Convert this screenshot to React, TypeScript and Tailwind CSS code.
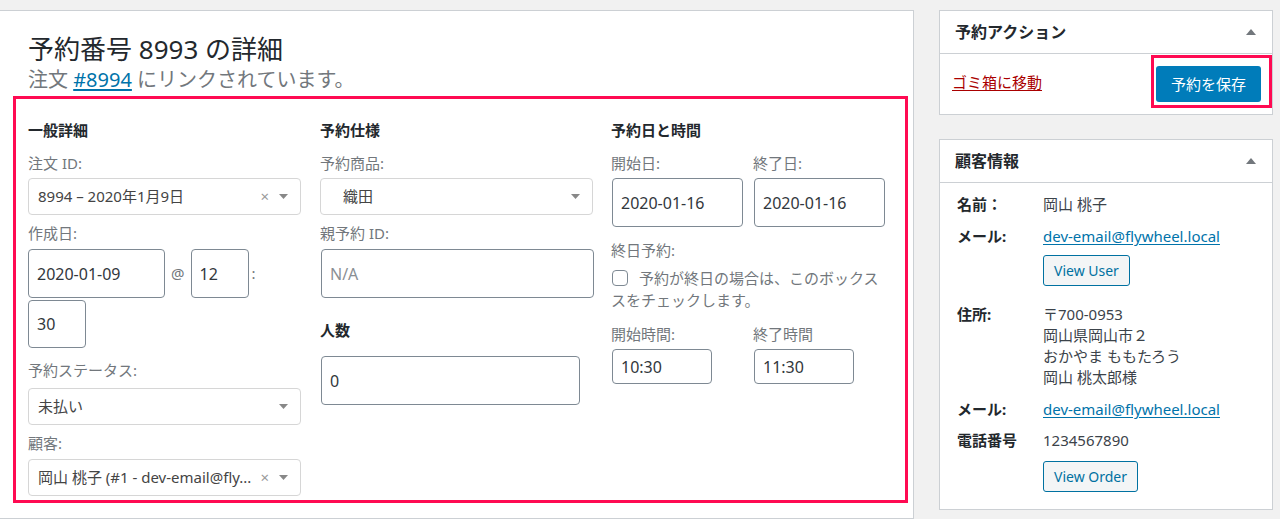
import React from 'react';

const font = "font-['Noto_Sans','Noto_Sans_CJK_JP',sans-serif]";

function Caret() {
  return (
    <svg width="9" height="5" viewBox="0 0 9 5" className="shrink-0">
      <path d="M0 0h9L4.5 5z" fill="#888" />
    </svg>
  );
}

function Select({ value, clear, indent }: { value: string; clear?: boolean; indent?: boolean }) {
  return (
    <div className="flex h-[37px] w-[273px] items-center rounded-[4px] border border-[#d6d6d6] bg-white pl-[9px] pr-[12px] text-[15px] text-[#444]">
      <span className={`flex-1 truncate whitespace-nowrap ${indent ? 'pl-[13px]' : ''}`}>{value}</span>
      {clear && <span className="mr-[10px] text-[15px] leading-none text-[#999]">×</span>}
      <Caret />
    </div>
  );
}

function TextInput({
  value,
  width,
  height = 'h-[49px]',
  placeholder,
}: {
  value?: string;
  width: string;
  height?: string;
  placeholder?: string;
}) {
  return (
    <div
      className={`flex ${height} ${width} items-center rounded-[4px] border border-[#7e8993] bg-white px-[8px] text-[16px] ${
        placeholder ? 'text-[#8a8f94]' : 'text-[#32373c]'
      }`}
    >
      {value ?? placeholder}
    </div>
  );
}

function Label({ children, className = '' }: { children: React.ReactNode; className?: string }) {
  return <div className={`h-[20px] text-[15px] leading-[20px] text-[#72777c] ${className}`}>{children}</div>;
}

function Heading({ children, className = '' }: { children: React.ReactNode; className?: string }) {
  return <div className={`h-[20px] text-[15px] font-bold leading-[20px] text-[#23282d] ${className}`}>{children}</div>;
}

function BoxHeader({ title }: { title: string }) {
  return (
    <div className="flex h-[43px] items-center justify-between border-b border-[#ccd0d4] pl-[15px] pr-[16px]">
      <span className="text-[16px] font-semibold text-[#23282d]">{title}</span>
      <svg width="10" height="6" viewBox="0 0 10 6">
        <path d="M0 6h10L5 0z" fill="#72777c" />
      </svg>
    </div>
  );
}

function WpButton({ children }: { children: React.ReactNode }) {
  return (
    <span className="inline-flex h-[31px] items-center rounded-[3px] border border-[#0071a1] bg-[#f3f5f6] px-[10px] text-[14px] text-[#0071a1]">
      {children}
    </span>
  );
}

function InfoRow({ label, children, className = '' }: { label: string; children: React.ReactNode; className?: string }) {
  return (
    <div className={`grid grid-cols-[86px_1fr] text-[15px] leading-[21px] ${className}`}>
      <span className="font-bold text-[#23282d]">{label}</span>
      <div className="text-[#3c434a]">{children}</div>
    </div>
  );
}

export default function App() {
  return (
    <div className={`flex h-[519px] w-[1280px] overflow-hidden bg-[#f1f1f1] pt-[10px] ${font}`}>
      {/* Main booking panel */}
      <div className="ml-[-1px] h-[509px] w-[915px] shrink-0 border border-[#ccd0d4] bg-white px-[13px] pt-[22px]">
        <h1 className="pl-[15px] text-[26px] leading-[32px] text-[#23282d]">予約番号 8993 の詳細</h1>
        <p className="mt-[3px] pl-[15px] text-[20px] leading-[24px] text-[#72777c]">
          注文{' '}
          <a className="text-[#0073aa] underline underline-offset-2" href="#">
            #8994
          </a>{' '}
          にリンクされています。
        </p>

        <div className="mt-[4px] grid h-[407px] w-[895px] grid-cols-[292px_291px_1fr] border-[3px] border-[#ff0a52] pl-[12px] pt-[21px]">
          {/* General */}
          <div className="flex flex-col">
            <Heading>一般詳細</Heading>
            <Label className="mt-[13px]">注文 ID:</Label>
            <div className="mt-[5px]">
              <Select value="8994 – 2020年1月9日" clear />
            </div>
            <Label className="mt-[8px]">作成日:</Label>
            <div className="mt-[6px] flex items-center">
              <TextInput value="2020-01-09" width="w-[137px]" />
              <span className="mx-[6px] text-[15px] text-[#72777c]">@</span>
              <TextInput value="12" width="w-[58px]" />
              <span className="ml-[3px] text-[15px] text-[#72777c]">:</span>
            </div>
            <div className="mt-[2px]">
              <TextInput value="30" width="w-[58px]" height="h-[48px]" />
            </div>
            <Label className="mt-[12px]">予約ステータス:</Label>
            <div className="mt-[8px]">
              <Select value="未払い" />
            </div>
            <Label className="mt-[8px]">顧客:</Label>
            <div className="mt-[6px]">
              <Select value="岡山 桃子 (#1 - dev-email@fly..." clear />
            </div>
          </div>

          {/* Booking spec */}
          <div className="flex flex-col">
            <Heading>予約仕様</Heading>
            <Label className="mt-[13px]">予約商品:</Label>
            <div className="mt-[5px]">
              <Select value="織田" indent />
            </div>
            <Label className="mt-[8px]">親予約 ID:</Label>
            <div className="mt-[6px] pl-px">
              <TextInput placeholder="N/A" width="w-[273px]" />
            </div>
            <Heading className="mt-[22px]">人数</Heading>
            <div className="mt-[16px] pl-px">
              <TextInput value="0" width="w-[259px]" />
            </div>
          </div>

          {/* Date and time */}
          <div className="flex flex-col">
            <Heading>予約日と時間</Heading>
            <div className="mt-[13px] grid grid-cols-[142px_1fr]">
              <Label>開始日:</Label>
              <Label>終了日:</Label>
            </div>
            <div className="mt-[5px] flex gap-[11px] pl-px">
              <TextInput value="2020-01-16" width="w-[131px]" />
              <TextInput value="2020-01-16" width="w-[131px]" />
            </div>
            <Label className="mt-[13px]">終日予約:</Label>
            <p className="mt-[7px] text-[15px] leading-[22px] text-[#72777c]">
              <span className="mr-[11px] ml-px inline-block h-[16px] w-[16px] translate-y-[2px] rounded-[4px] border border-[#7e8993] bg-white" />
              予約が終日の場合は、このボックス
              <br />
              スをチェックします。
            </p>
            <div className="mt-[13px] grid grid-cols-[142px_1fr]">
              <Label>開始時間:</Label>
              <Label>終了時間</Label>
            </div>
            <div className="mt-[5px] flex gap-[42px] pl-px">
              <TextInput value="10:30" width="w-[100px]" height="h-[35px]" />
              <TextInput value="11:30" width="w-[100px]" height="h-[35px]" />
            </div>
          </div>
        </div>
      </div>

      {/* Sidebar */}
      <div className="ml-[25px] flex w-[334px] shrink-0 flex-col gap-[24px]">
        <div className="border border-[#ccd0d4] bg-white">
          <BoxHeader title="予約アクション" />
          <div className="flex items-start justify-between pb-[6px] pl-[12px] pt-px">
            <a href="#" className="mt-[16px] text-[15px] leading-[22px] text-[#a00] underline underline-offset-2">
              ゴミ箱に移動
            </a>
            <div className="border-[3px] border-[#ff0a52] pb-[3px] pl-[2px] pr-[8px] pt-[8px]">
              <span className="flex h-[36px] items-center rounded-[3px] bg-[#007cba] px-[15px] text-[15px] text-white">
                予約を保存
              </span>
            </div>
          </div>
        </div>

        <div className="border border-[#ccd0d4] bg-white">
          <BoxHeader title="顧客情報" />
          <div className="flex flex-col pb-[17px] pl-[17px] pt-[11px]">
            <InfoRow label="名前：">岡山 桃子</InfoRow>
            <InfoRow label="メール:" className="mt-[11px]">
              <a href="#" className="text-[#0073aa] underline underline-offset-2">
                dev-email@flywheel.local
              </a>
            </InfoRow>
            <div className="mt-[8px] pl-[86px]">
              <WpButton>View User</WpButton>
            </div>
            <InfoRow label="住所:" className="mt-[18px]">
              <div className="leading-[21px]">
                〒700-0953
                <br />
                岡山県岡山市２
                <br />
                おかやま ももたろう
                <br />
                岡山 桃太郎様
              </div>
            </InfoRow>
            <InfoRow label="メール:" className="mt-[11px]">
              <a href="#" className="text-[#0073aa] underline underline-offset-2">
                dev-email@flywheel.local
              </a>
            </InfoRow>
            <InfoRow label="電話番号" className="mt-[10px]">
              1234567890
            </InfoRow>
            <div className="mt-[10px] pl-[86px]">
              <WpButton>View Order</WpButton>
            </div>
          </div>
        </div>
      </div>
    </div>
  );
}
